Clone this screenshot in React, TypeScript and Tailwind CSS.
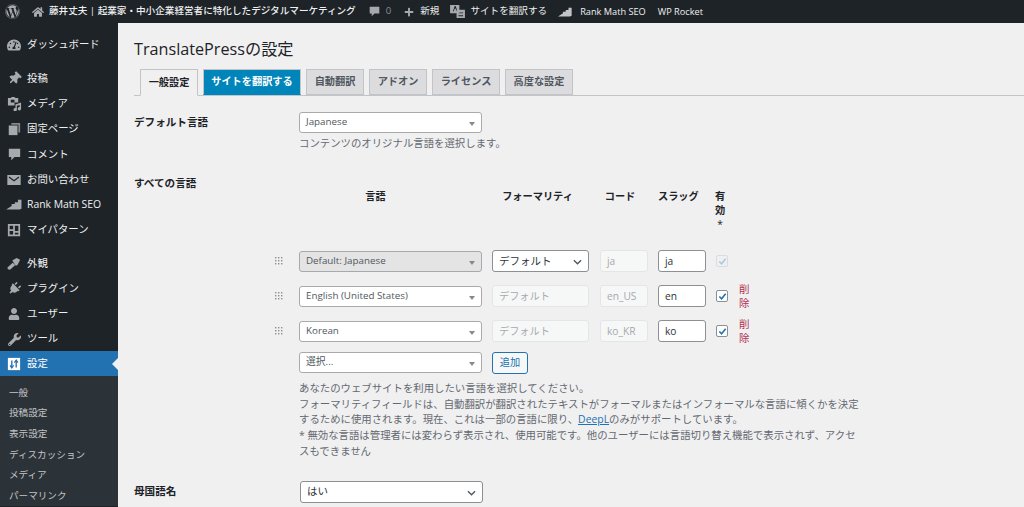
import type { ReactNode } from "react";
import { FaHome, FaPlug, FaPlus, FaTachometerAlt, FaThumbtack, FaUser, FaWordpress, FaWrench } from "react-icons/fa";

const FONT = "font-['Open_Sans','Noto_Sans_CJK_JP',sans-serif]";

function RankMathIcon({ className }: { className?: string }): JSX.Element {
  return (
    <svg viewBox="0 0 20 14" className={className} fill="currentColor">
      <path d="M0 13.5l6-4 1-.5V6.5h4V4h4V1h4.500v11.500L17 13.500z" />
    </svg>
  );
}

function MediaIcon({ className }: { className?: string }): JSX.Element {
  return (
    <svg viewBox="0 0 16 16" className={className} fill="currentColor">
      <path d="M1 2h3l1-1h3l1 1h3v5H8v3H1zM4 4v3h4V4z" fillRule="evenodd" />
      <path d="M9 9l6-2v6.500a1.800 1.800 0 1 1-1.500-1.700V9.500l-3 1v4a1.800 1.800 0 1 1-1.500-1.700z" />
    </svg>
  );
}

function PagesIcon({ className }: { className?: string }): JSX.Element {
  return (
    <svg viewBox="0 0 16 16" className={className} fill="currentColor">
      <path d="M5 1h10v11h-2V3H5z" opacity="0.75" />
      <path d="M2 4h10v11H2z" />
    </svg>
  );
}

function CommentIcon({ className }: { className?: string }): JSX.Element {
  return (
    <svg viewBox="0 0 16 16" className={className} fill="currentColor">
      <path d="M1 1h14v10H8l-4 4v-4H1z" />
    </svg>
  );
}

function EnvelopeIcon({ className }: { className?: string }): JSX.Element {
  return (
    <svg viewBox="0 0 16 12" className={className}>
      <rect width="16" height="12" fill="currentColor" />
      <path d="M2 2.500l6 4.500 6-4.500" fill="none" stroke="#1d2327" strokeWidth="1.500" />
    </svg>
  );
}

function BrushIcon({ className }: { className?: string }): JSX.Element {
  return (
    <svg viewBox="0 0 16 16" className={className} fill="currentColor">
      <path d="M6 4l5-3 4 2-3 6-2 1z" />
      <path d="M6.500 6.500l3 2.500-6 5.500-2.500-.5-.5-2z" />
    </svg>
  );
}

function PatternIcon({ className }: { className?: string }): JSX.Element {
  return (
    <svg viewBox="0 0 16 16" className={className} fill="currentColor">
      <path d="M1 1h14v14H1zM3 3v4h4V3zM9 3v6h4V3zM3 9v4h4V9zM9 11v2h4v-2z" fillRule="evenodd" />
    </svg>
  );
}

function SettingsIcon({ className }: { className?: string }): JSX.Element {
  return (
    <svg viewBox="0 0 16 16" className={className} fill="none">
      <rect x="1" y="1" width="14" height="14" fill="#ffffff" />
      <path d="M5.500 4v8M10.500 4v8" stroke="#2271b1" strokeWidth="1.500" />
      <path d="M3.500 9.500l2 3 2-3M8.500 6.500l2-3 2 3" stroke="#2271b1" strokeWidth="1.300" />
    </svg>
  );
}

function TranslateIcon({ className }: { className?: string }): JSX.Element {
  return (
    <svg viewBox="0 0 16 14" className={className} fill="currentColor">
      <path d="M0 0h10v9H0zM3 7l1-.2 1-3h1l1 3 1 .2-2-6H5z" fillRule="evenodd" />
      <path d="M7 5h9v9H7zM9 8v1h5V8zM9 11v1h5v-1z" fillRule="evenodd" />
    </svg>
  );
}

const MENU_GROUPS = [
  [{ label: "ダッシュボード", icon: <FaTachometerAlt className="size-[14px]" /> }],
  [
    { label: "投稿", icon: <FaThumbtack className="size-[13px] rotate-45" /> },
    { label: "メディア", icon: <MediaIcon className="size-[15px]" /> },
    { label: "固定ページ", icon: <PagesIcon className="size-[14px]" /> },
    { label: "コメント", icon: <CommentIcon className="size-[13px]" /> },
    { label: "お問い合わせ", icon: <EnvelopeIcon className="w-[14px] h-[10px]" /> },
    { label: "Rank Math SEO", icon: <RankMathIcon className="w-[16px] h-[11px]" /> },
    { label: "マイパターン", icon: <PatternIcon className="size-[14px]" /> },
  ],
  [
    { label: "外観", icon: <BrushIcon className="size-[14px]" /> },
    { label: "プラグイン", icon: <FaPlug className="size-[13px] rotate-45" /> },
    { label: "ユーザー", icon: <FaUser className="size-[12px]" /> },
    { label: "ツール", icon: <FaWrench className="size-[13px]" /> },
  ],
];

const SUBMENU = ["一般", "投稿設定", "表示設定", "ディスカッション", "メディア", "パーマリンク"];

const TABS = [
  { label: "一般設定", width: "w-[58px]", kind: "active" },
  { label: "サイトを翻訳する", width: "w-[98px]", kind: "primary" },
  { label: "自動翻訳", width: "w-[58px]", kind: "plain" },
  { label: "アドオン", width: "w-[58px]", kind: "plain" },
  { label: "ライセンス", width: "w-[68px]", kind: "plain" },
  { label: "高度な設定", width: "w-[68px]", kind: "plain" },
];

function TopBar(): JSX.Element {
  return (
    <header className="h-[23px] shrink-0 bg-[#1d2327] text-[#f0f0f1] flex items-center text-[9.6px]">
      <FaWordpress className="ml-[5px] size-[15px] text-[#a7aaad]" />
      <FaHome className="ml-[12px] size-[12px] text-[#a7aaad]" />
      <span className="ml-[5px] font-medium whitespace-nowrap">藤井丈夫 | 起業家・中小企業経営者に特化したデジタルマーケティング</span>
      <CommentIcon className="ml-[13px] size-[11px] text-[#a7aaad]" />
      <span className="ml-[6px] text-[#8c8f94]">0</span>
      <FaPlus className="ml-[13px] size-[10px] text-[#a7aaad]" />
      <span className="ml-[6px]">新規</span>
      <TranslateIcon className="ml-[11px] w-[15px] h-[13px] text-[#a7aaad]" />
      <span className="ml-[5px] whitespace-nowrap">サイトを翻訳する</span>
      <RankMathIcon className="ml-[11px] w-[14px] h-[10px] text-[#c3c4c7]" />
      <span className="ml-[8px] text-[9.200px] whitespace-nowrap">Rank Math SEO</span>
      <span className="ml-[12px] text-[9.200px] whitespace-nowrap">WP Rocket</span>
    </header>
  );
}

function MenuRow({ icon, label }: { icon: ReactNode; label: string }): JSX.Element {
  return (
    <div className="h-[25.2px] flex items-center text-[10.4px] text-[#f0f0f1]">
      <span className="w-[27px] shrink-0 flex items-center justify-center pl-[1px] text-[#a7aaad]">{icon}</span>
      <span className="whitespace-nowrap">{label}</span>
    </div>
  );
}

function Sidebar(): JSX.Element {
  return (
    <aside className="w-[118px] shrink-0 bg-[#1d2327] pt-[9.5px] flex flex-col gap-[8.5px]">
      {MENU_GROUPS.map((items) => (
        <div key={items[0].label}>
          {items.map((item) => (
            <MenuRow key={item.label} icon={item.icon} label={item.label} />
          ))}
        </div>
      ))}
      <div className="-mt-[9px]">
        <div className="relative h-[25px] bg-[#2271b1] flex items-center text-[10.4px] text-white">
          <span className="w-[27px] shrink-0 flex items-center justify-center pl-[1px]">
            <SettingsIcon className="size-[14px]" />
          </span>
          設定
          <span className="absolute right-0 top-[7px] border-y-[6px] border-r-[6px] border-y-transparent border-r-[#f0f0f1]" />
        </div>
        <div className="bg-[#2c3338] pt-[6.5px] text-[9.600px] text-[#c3c4c7]">
          {SUBMENU.map((item) => (
            <div key={item} className="h-[20.6px] pl-[9px] flex items-center">
              {item}
            </div>
          ))}
        </div>
      </div>
    </aside>
  );
}

function Tabs(): JSX.Element {
  return (
    <nav className="h-[27px] flex gap-[5px] pl-[6px] border-b border-[#c3c4c7] mt-[9px]">
      {TABS.map((tab) => {
        const look =
          tab.kind === "active"
            ? "bg-[#f0f0f1] text-[#1d2327] border-[#c3c4c7] border-b-[#f0f0f1] h-[27px]"
            : tab.kind === "primary"
              ? "bg-[#0085ba] text-white border-[#c3c4c7] border-b-[#0085ba] h-[26px]"
              : "bg-[#dcdcde] text-[#50575e] border-[#c3c4c7] h-[26px]";
        return (
          <div
            key={tab.label}
            className={`${tab.width} ${look} border flex items-center justify-center text-[10.2px] font-semibold whitespace-nowrap`}
          >
            {tab.label}
          </div>
        );
      })}
    </nav>
  );
}

function Caret(): JSX.Element {
  return <span className="absolute right-[6px] top-[9px] border-x-[3px] border-t-[4px] border-x-transparent border-t-[#888888]" />;
}

function Chevron(): JSX.Element {
  return (
    <svg viewBox="0 0 10 6" className="absolute right-[6px] top-[8px] w-[9px] h-[6px]" fill="none">
      <path d="M1 1l4 4 4-4" stroke="#50575e" strokeWidth="1.500" />
    </svg>
  );
}

function LangSelect({ label, disabled }: { label: string; disabled?: boolean }): JSX.Element {
  const look = disabled ? "bg-[#e4e4e4] text-[#50575e] border-[#a7aaad]" : "bg-white text-[#50575e] border-[#aaaaaa]";
  return (
    <div className={`relative w-[183px] h-[21px] rounded-[3px] border ${look} pl-[6px] flex items-center text-[9.800px]`}>
      {label}
      <Caret />
    </div>
  );
}

function NativeSelect({ label, width }: { label: string; width: string }): JSX.Element {
  return (
    <div className={`relative ${width} h-[22px] rounded-[3px] border border-[#8c8f94] bg-white pl-[6px] flex items-center text-[10.5px] text-[#2c3338]`}>
      {label}
      <Chevron />
    </div>
  );
}

function FieldBox({ value, width, enabled }: { value: string; width: string; enabled?: boolean }): JSX.Element {
  const look = enabled ? "bg-white border-[#8c8f94] text-[#2c3338]" : "bg-[#f6f7f7] border-[#e4e5e7] text-[#a7aaad]";
  return (
    <div className={`${width} h-[22px] rounded-[3px] border ${look} pl-[6px] flex items-center text-[10.2px]`}>
      {value}
    </div>
  );
}

function Handle(): JSX.Element {
  return (
    <svg viewBox="0 0 8 8" className="size-[8px]" fill="#8c8f94">
      {[0, 3, 6].map((y) =>
        [0, 3, 6].map((x) => <rect key={`${x}-${y}`} x={x} y={y} width="1.4" height="1.4" />),
      )}
    </svg>
  );
}

function Check({ muted }: { muted?: boolean }): JSX.Element {
  return (
    <span
      className={`size-[12px] rounded-[2px] border flex items-center justify-center ${
        muted ? "border-[#dcdcde] bg-[#f0f0f1]" : "border-[#8c8f94] bg-white"
      }`}
    >
      <svg viewBox="0 0 10 10" className="size-[9px]" fill="none">
        <path d="M1.500 5l2.500 2.500L8.500 2" stroke={muted ? "#a9c9e2" : "#2271b1"} strokeWidth="1.800" />
      </svg>
    </span>
  );
}

const ROW_GRID = "grid grid-cols-[165px_183px_10px_97px_11px_48px_10px_48px_10px_12px_11px_13px]";

function LanguageRow({
  select,
  disabled,
  formality,
  code,
  slug,
}: {
  select: string;
  disabled?: boolean;
  formality?: boolean;
  code: string;
  slug: string;
}): JSX.Element {
  return (
    <div className={`${ROW_GRID} h-[35px] items-center`}>
      <div className="pl-[141px]">
        <Handle />
      </div>
      <LangSelect label={select} disabled={disabled} />
      <span />
      {formality ? <NativeSelect label="デフォルト" width="w-[97px]" /> : <FieldBox value="デフォルト" width="w-[97px]" />}
      <span />
      <FieldBox value={code} width="w-[48px]" />
      <span />
      <FieldBox value={slug} width="w-[48px]" enabled />
      <span />
      <Check muted={disabled} />
      <span />
      {disabled ? <span /> : <span className="w-[11px] text-[10.5px] leading-[14px] text-[#b3304f]">削除</span>}
    </div>
  );
}

function Settings(): JSX.Element {
  return (
    <main className="flex-1 bg-[#f0f0f1] min-w-0 pl-[16px] overflow-hidden">
      <h1 className="mt-[15px] h-[22px] leading-[22px] text-[16.2px] text-[#1d2327]">TranslatePressの設定</h1>
      <Tabs />

      <section className="mt-[16px] flex">
        <div className="w-[165px] pt-[3px] text-[10.6px] font-semibold text-[#1d2327]">デフォルト言語</div>
        <div>
          <LangSelect label="Japanese" />
          <p className="mt-[2px] text-[10.4px] leading-[16px] text-[#646970]">コンテンツのオリジナル言語を選択します。</p>
        </div>
      </section>

      <section className="mt-[25px]">
        <div className="text-[10.6px] font-semibold text-[#1d2327]">すべての言語</div>
        <div className={`${ROW_GRID} h-[50px] text-[10.2px] font-semibold text-[#1d2327] -mt-[3px] text-center`}>
          <span />
          <span className="pr-[30px]">言語</span>
          <span />
          <span className="pr-[6px] whitespace-nowrap">フォーマリティ</span>
          <span />
          <span className="pr-[8px] whitespace-nowrap">コード</span>
          <span />
          <span className="pr-[8px] whitespace-nowrap">スラッグ</span>
          <span />
          <span className="w-[12px] -ml-[2px] leading-[14px]">
            有効
            <span className="block font-normal">*</span>
          </span>
        </div>
        <div className="pt-[5px]">
          <LanguageRow select="Default: Japanese" disabled formality code="ja" slug="ja" />
          <LanguageRow select="English (United States)" code="en_US" slug="en" />
          <LanguageRow select="Korean" code="ko_KR" slug="ko" />
        </div>
        <div className="mt-[3px] pl-[165px] flex items-start gap-[10px]">
          <LangSelect label="選択..." />
          <button className="w-[36px] h-[22px] rounded-[3px] border border-[#2271b1] bg-[#f6f7f7] text-[10.2px] text-[#2271b1]">
            追加
          </button>
        </div>
        <p className="mt-[7px] ml-[165px] w-[562px] text-[10.4px] leading-[15.8px] text-[#646970]">
          あなたのウェブサイトを利用したい言語を選択してください。
          <br />
          フォーマリティフィールドは、自動翻訳が翻訳されたテキストがフォーマルまたはインフォーマルな言語に傾くかを決定するために使用されます。現在、これは一部の言語に限り、
          <span className="text-[#2271b1] underline">DeepL</span>
          のみがサポートしています。
          <br />* 無効な言語は管理者には変わらず表示され、使用可能です。他のユーザーには言語切り替え機能で表示されず、アクセスもできません
        </p>
      </section>

      <section className="mt-[21px] flex">
        <div className="w-[166px] pt-[3px] text-[10.6px] font-semibold text-[#1d2327]">母国語名</div>
        <NativeSelect label="はい" width="w-[183px]" />
      </section>
    </main>
  );
}

export default function App(): JSX.Element {
  return (
    <div className={`${FONT} w-[1024px] h-[507px] overflow-hidden flex flex-col`}>
      <TopBar />
      <div className="flex flex-1 min-h-0">
        <Sidebar />
        <Settings />
      </div>
    </div>
  );
}
